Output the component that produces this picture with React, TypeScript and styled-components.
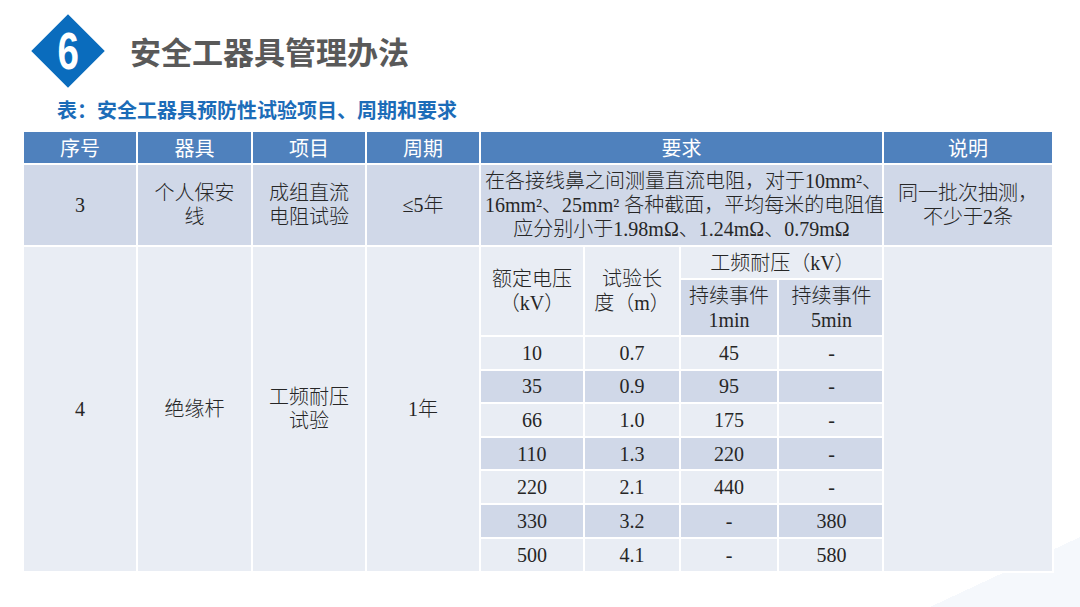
import React from 'react'
import styled, { createGlobalStyle } from 'styled-components'

const GlobalStyle = createGlobalStyle`
  html, body {
    margin: 0;
    padding: 0;
    background: #fff;
  }

  * {
    box-sizing: border-box;
  }
`

const Slide = styled.div`
  width: 1080px;
  height: 607px;
  overflow: hidden;
  padding: 14px 0 0 24px;
  background:
    linear-gradient(to top left, #f5f8fc 0 50%, transparent 50%) right bottom / 150px 70px no-repeat,
    #fff;
  font-family: "Liberation Serif", "Noto Sans CJK SC", serif;
`

const TitleBar = styled.header`
  display: flex;
  align-items: center;
  gap: 25px;
  height: 74px;
  margin-left: 7px;
`

const Badge = styled.div`
  flex-shrink: 0;
  width: 74px;
  height: 74px;
  display: flex;
  align-items: center;
  justify-content: center;
`

const Diamond = styled.div`
  width: 52px;
  height: 52px;
  background: #0a6cbd;
  transform: rotate(45deg);
  display: flex;
  align-items: center;
  justify-content: center;
`

const BadgeNumber = styled.span`
  color: #fff;
  font: bold 52px/1 "Liberation Sans", "DejaVu Sans", sans-serif;
  transform: rotate(-45deg) scaleX(0.74);
`

const Title = styled.h1`
  margin: 0;
  font: bold 31px/1.2 "Noto Sans CJK SC", sans-serif;
  color: #595959;
`

const Caption = styled.h2`
  margin: 8px 0 6px 33px;
  font: bold 20px/28px "Noto Sans CJK SC", sans-serif;
  color: #1c6cb8;
`

const Grid = styled.table`
  width: 1030px;
  margin-left: -2px;
  border-collapse: collapse;
  table-layout: fixed;
  color: #262626;
  font-size: 20px;
`

const HeadCell = styled.th`
  height: 33px;
  padding: 0;
  border: 2px solid #fff;
  background: #4f81bd;
  color: #fff;
  font: 400 20px/1 "Noto Sans CJK SC", sans-serif;
`

type Tone = 'dark' | 'light'

const Cell = styled.td<{ $tone: Tone; $h?: number; $flush?: boolean }>`
  height: ${p => (p.$h ? `${p.$h}px` : 'auto')};
  padding: ${p => (p.$flush ? '0' : '0 4px')};
  border: 2px solid #fff;
  background: ${p => (p.$tone === 'dark' ? '#d0d8e8' : '#e9edf4')};
  text-align: center;
  vertical-align: middle;
  line-height: 24px;
  font-weight: 300;
  white-space: nowrap;
`

const SubGrid = styled.table`
  width: 100%;
  border-collapse: collapse;
  border-style: hidden;
  table-layout: fixed;
`

const columns = [
  { label: '序号', width: 114 },
  { label: '器具', width: 115 },
  { label: '项目', width: 114 },
  { label: '周期', width: 114 },
  { label: '要求', width: 403 },
  { label: '说明', width: 170 },
]

const subColumns = [103, 96, 98, 106]

const voltageRows: [string, string, string, string][] = [
  ['10', '0.7', '45', '-'],
  ['35', '0.9', '95', '-'],
  ['66', '1.0', '175', '-'],
  ['110', '1.3', '220', '-'],
  ['220', '2.1', '440', '-'],
  ['330', '3.2', '-', '380'],
  ['500', '4.1', '-', '580'],
]

const VoltageTable = () => (
  <SubGrid>
    <colgroup>
      {subColumns.map((w, i) => (
        <col key={i} style={{ width: w }} />
      ))}
    </colgroup>
    <tbody>
      <tr>
        <Cell $tone="light" $h={32} rowSpan={2}>
          额定电压<br />（kV）
        </Cell>
        <Cell $tone="light" rowSpan={2}>
          试验长<br />度（m）
        </Cell>
        <Cell $tone="light" $h={32} colSpan={2}>
          工频耐压（kV）
        </Cell>
      </tr>
      <tr>
        <Cell $tone="dark" $h={57}>
          持续事件<br />1min
        </Cell>
        <Cell $tone="dark">
          持续事件<br />5min
        </Cell>
      </tr>
      {voltageRows.map((row, i) => (
        <tr key={row[0]}>
          {row.map((v, j) => (
            <Cell key={j} $tone={i % 2 ? 'dark' : 'light'} $h={33.6}>
              {v}
            </Cell>
          ))}
        </tr>
      ))}
    </tbody>
  </SubGrid>
)

export default function App() {
  return (
    <>
      <GlobalStyle />
      <Slide>
        <TitleBar>
          <Badge>
            <Diamond>
              <BadgeNumber>6</BadgeNumber>
            </Diamond>
          </Badge>
          <Title>安全工器具管理办法</Title>
        </TitleBar>

        <Caption>表：安全工器具预防性试验项目、周期和要求</Caption>

        <Grid>
          <colgroup>
            {columns.map(c => (
              <col key={c.label} style={{ width: c.width }} />
            ))}
          </colgroup>
          <thead>
            <tr>
              {columns.map(c => (
                <HeadCell key={c.label}>{c.label}</HeadCell>
              ))}
            </tr>
          </thead>
          <tbody>
            <tr>
              <Cell $tone="dark" $h={82}>3</Cell>
              <Cell $tone="dark">个人保安<br />线</Cell>
              <Cell $tone="dark">成组直流<br />电阻试验</Cell>
              <Cell $tone="dark">≤5年</Cell>
              <Cell $tone="dark">
                在各接线鼻之间测量直流电阻，对于10mm²、<br />
                16mm²、25mm² 各种截面，平均每米的电阻值<br />
                应分别小于1.98mΩ、1.24mΩ、0.79mΩ
              </Cell>
              <Cell $tone="dark">同一批次抽测，<br />不少于2条</Cell>
            </tr>
            <tr>
              <Cell $tone="light">4</Cell>
              <Cell $tone="light">绝缘杆</Cell>
              <Cell $tone="light">工频耐压<br />试验</Cell>
              <Cell $tone="light">1年</Cell>
              <Cell $tone="light" $flush>
                <VoltageTable />
              </Cell>
              <Cell $tone="light" />
            </tr>
          </tbody>
        </Grid>
      </Slide>
    </>
  )
}
